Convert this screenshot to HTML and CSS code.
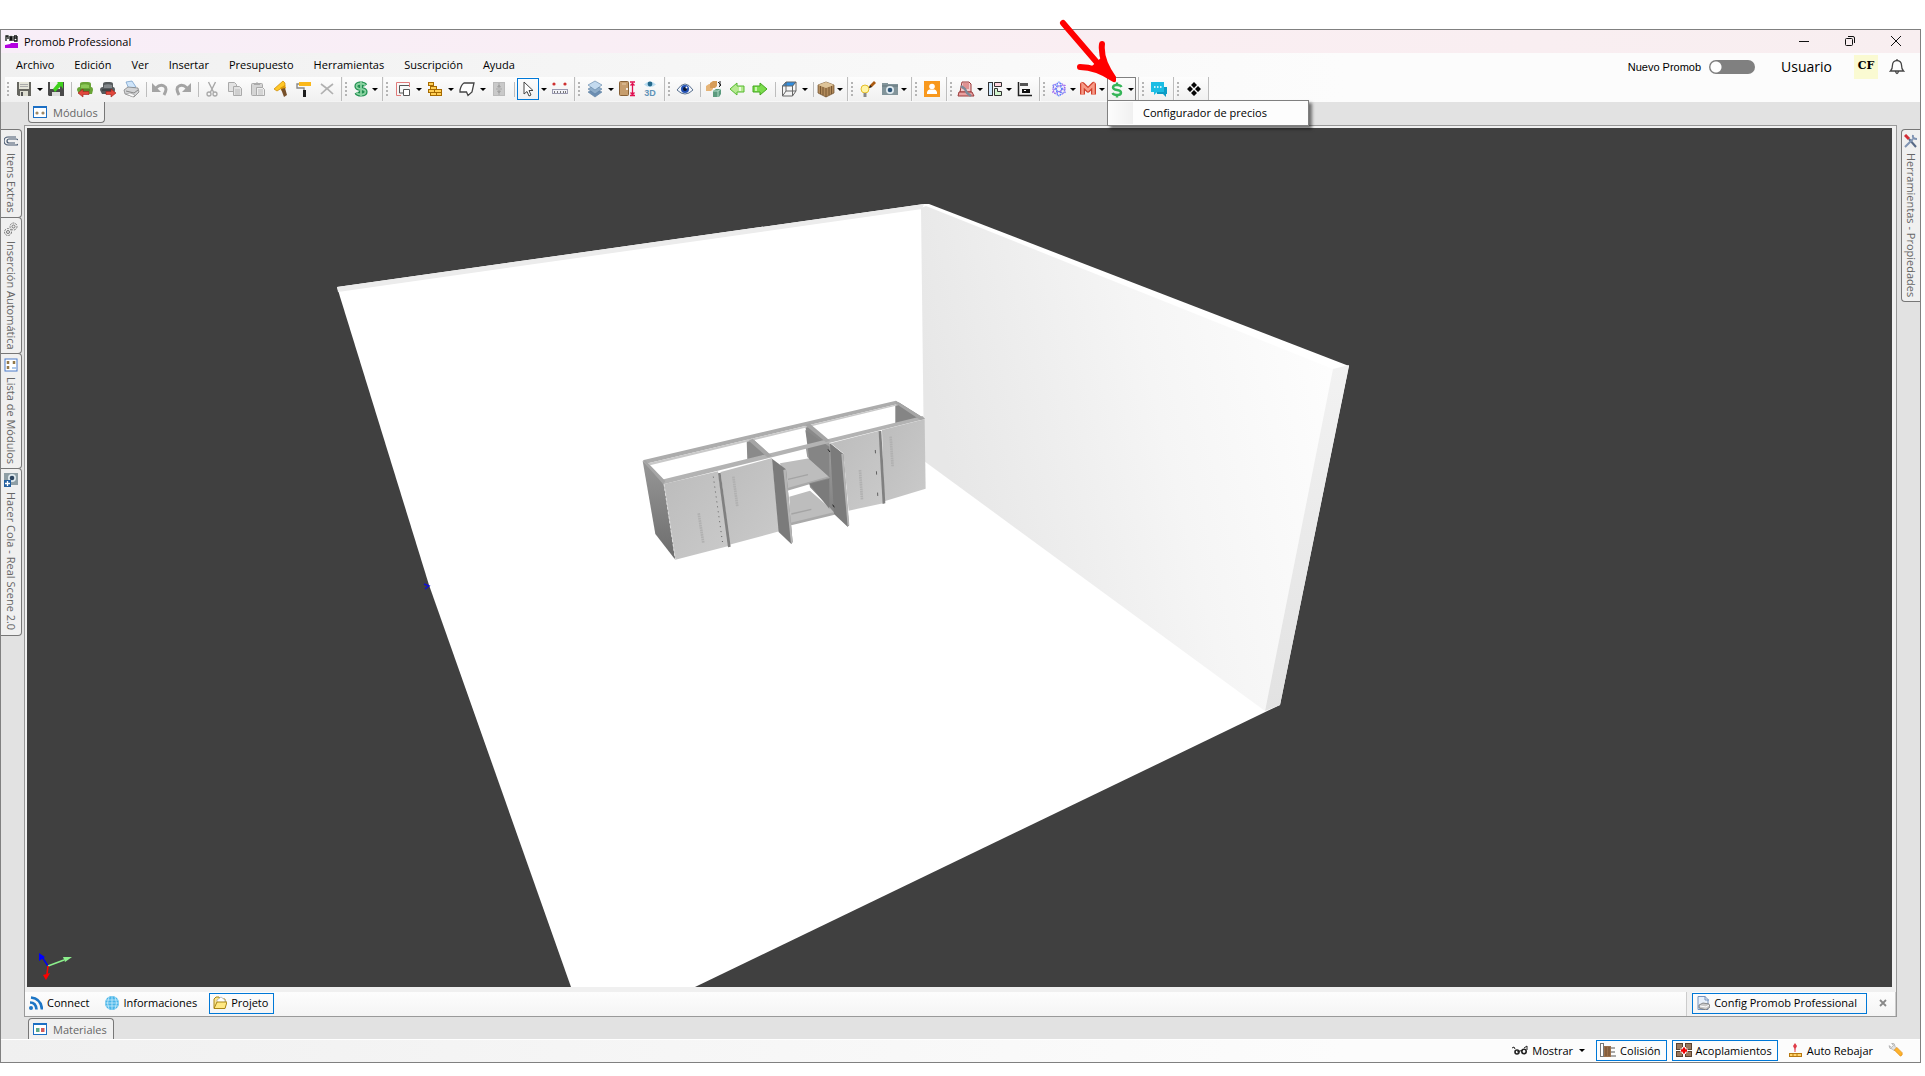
FILE: index.html
```html
<!DOCTYPE html>
<html lang="es">
<head>
  <meta charset="UTF-8" />
  <meta name="viewport" content="width=device-width, initial-scale=1.0" />
  <title>Promob Professional</title>
  <link rel="stylesheet" href="styles.css">
</head>
<body>
  <div class="window">
    <header class="titlebar">
      <svg class="app-logo" viewBox="0 0 13 13"><rect width="13" height="13" fill="#fff"/><path d="M1 6V1h2v3M5 6V1l1 3 1-3v5M9 1h3M9 3h3M9 6h3V1M9 1v5" stroke="#111" stroke-width="1.3" fill="none"/><path d="M0 10l5-1 1-1h7v5H0z" fill="#b400e0"/></svg>
      <span class="app-title">Promob Professional</span>
      <div class="window-buttons">
        <button aria-label="Minimizar"><svg viewBox="0 0 12 12"><path d="M1 6.500h10" stroke="#111" fill="none"/></svg></button>
        <button aria-label="Restaurar"><svg viewBox="0 0 12 12"><rect x="1.500" y="3.500" width="7" height="7" rx="1" stroke="#111" fill="none"/><path d="M4 1.500h5q1.500 0 1.500 1.500v5" stroke="#111" fill="none"/></svg></button>
        <button aria-label="Cerrar"><svg viewBox="0 0 12 12"><path d="M1 1l10 10M11 1L1 11" stroke="#111" fill="none"/></svg></button>
      </div>
    </header>

    <div class="top-area">
      <div class="menu-row">
        <nav class="menu">
          <button>Archivo</button>
          <button>Edición</button>
          <button>Ver</button>
          <button>Insertar</button>
          <button>Presupuesto</button>
          <button>Herramientas</button>
          <button>Suscripción</button>
          <button>Ayuda</button>
        </nav>
        <div class="account">
          <label class="switch-label" for="nuevo">Nuevo Promob</label>
          <input type="checkbox" id="nuevo" class="switch" />
          <span class="user">Usuario</span>
          <span class="avatar">CF</span>
          <button class="bell" aria-label="Notificaciones"><svg viewBox="0 0 16 17"><path d="M1.500 13h13c-2-2-2-3-2-6a4.500 4.500 0 0 0-9 0c0 3 0 4-2 6zM6.500 13.500q1.500 4 3 0M8 2.500V1" fill="none" stroke="#444" stroke-width="1.300"/></svg></button>
        </div>
      </div>

      <div class="toolbar">
        <div class="group">
          <i class="grip"></i>
          <button class="tool drop" aria-label="Guardar"><svg viewBox="0 0 16 16"><path d="M1 1h14v14H2.500L1 13.500z" fill="#666660"/><rect x="3" y="1" width="10" height="7" fill="#e4e4d8"/><path d="M4 3.500h8M4 5.500h8" stroke="#aaa"/><rect x="4" y="10" width="8" height="5" fill="#deded2"/><rect x="5" y="11" width="2" height="4" fill="#555"/></svg></button>
          <button class="tool" aria-label="Guardar como"><svg viewBox="0 0 16 16"><path d="M0 1h16v14H1L0 14z" fill="#4a4a4a"/><rect x="2" y="1" width="10" height="7" fill="#eee"/><rect x="4" y="11" width="8" height="4" fill="#ddd"/><path d="M15 1H9l1 1-5 6 2 3 6-6 2 3z" fill="#3fd11c"/></svg></button>
          <i class="sep"></i>
          <button class="tool" aria-label="Importar módulo"><svg viewBox="0 0 16 16"><path d="M3 6V3q0-2 3-2h5q3 0 3 2v3q2 0 2 3l-1 4H2L0 9q0-3 3-3z" fill="#69a437"/><path d="M4 7V4q4-1.500 8 0v3z" fill="#8cc957"/><path d="M3 9h10" stroke="#3e6a1e"/><path d="M1 12l5-4v2.500h6v3H6V16z" fill="#e2473c" stroke="#9b1f17" stroke-width=".6"/></svg></button>
          <button class="tool" aria-label="Exportar módulo"><svg viewBox="0 0 16 16"><path d="M3 6V3q0-2 3-2h4q3 0 3 2v3q2 0 2 3l-1 4H2L0 9q0-3 3-3z" fill="#555a5c"/><path d="M4 7V4q4-1.500 8 0v3z" fill="#83888b"/><path d="M2 9h10" stroke="#2c2f30"/><path d="M16 12l-5-4v2.500H6v3h5V16z" fill="#e2473c" stroke="#9b1f17" stroke-width=".6"/></svg></button>
          <button class="tool" aria-label="Imprimir"><svg viewBox="0 0 16 16"><path d="M3 1l6-1 4 6-7 2z" fill="#cfe5fa" stroke="#6b97c4" stroke-width=".7"/><path d="M1 9l4-3 10 1 1 4-5 5-9-3z" fill="#d2d3d5" stroke="#777" stroke-width=".7"/><path d="M3 10l8 2 4-3" fill="none" stroke="#888"/><path d="M3 13l4-1 5 2-2 2z" fill="#fafafa" stroke="#888" stroke-width=".5"/></svg></button>
          <i class="sep"></i>
          <button class="tool" aria-label="Deshacer"><svg viewBox="0 0 16 16"><path d="M4 7q4-4 8-2t0 9" fill="none" stroke="#a4a4a4" stroke-width="3"/><path d="M0 2v9h9z" fill="#a4a4a4"/></svg></button>
          <button class="tool" aria-label="Rehacer"><svg viewBox="0 0 16 16"><path d="M12 7q-4-4-8-2t0 9" fill="none" stroke="#a4a4a4" stroke-width="3"/><path d="M16 2v9H7z" fill="#a4a4a4"/></svg></button>
          <i class="sep"></i>
          <button class="tool" aria-label="Cortar"><svg viewBox="0 0 16 16"><path d="M4.500 1l5 10M11.500 1l-5 10" stroke="#a8a8a8" stroke-width="1.400" fill="none"/><circle cx="5" cy="13" r="2" fill="none" stroke="#a8a8a8" stroke-width="1.300"/><circle cx="11" cy="13" r="2" fill="none" stroke="#a8a8a8" stroke-width="1.300"/></svg></button>
          <button class="tool" aria-label="Copiar"><svg viewBox="0 0 16 16"><g fill="#e2e2e2" stroke="#aaa"><path d="M1.500 1.500h6l2 2v7h-8z"/><path d="M6.500 5.500h6l2 2v7h-8z"/></g><path d="M8 9h5M8 11h5M8 13h5" stroke="#bbb"/></svg></button>
          <button class="tool" aria-label="Pegar"><svg viewBox="0 0 16 16"><rect x="1.500" y="2.500" width="11" height="12" rx="1" fill="#d5d5d5" stroke="#aaa"/><path d="M4 4V2h2l1-1 1 1h2v2z" fill="#aaa"/><path d="M6.500 6.500h6l2 2v6h-8z" fill="#eee" stroke="#aaa"/><path d="M8 9h5M8 11h5M8 13h5" stroke="#bbb"/></svg></button>
          <button class="tool" aria-label="Martillo"><svg viewBox="0 0 16 16"><path d="M1 8L10 0l2 2v3L4 10z" fill="#ffc727" stroke="#c88700" stroke-width=".7"/><path d="M7 7l5-3 1 3-4 3z" fill="#dd9a08"/><path d="M8 8l4-1 2 7-3 2z" fill="#77502a"/></svg></button>
          <button class="tool" aria-label="Pintar"><svg viewBox="0 0 16 16"><rect x="3" y="1" width="12" height="4" fill="#fbb81a"/><path d="M3 3H1v4h7v3" fill="none" stroke="#888" stroke-width="1.400"/><rect x="7" y="9" width="3" height="7" fill="#1c1c1c"/></svg></button>
          <button class="tool" aria-label="Borrar"><svg viewBox="0 0 16 16"><path d="M2 3q7 5 12 10M14 3Q7 8 2 13" stroke="#b1b1b1" stroke-width="1.700" fill="none"/></svg></button>
        </div>
        <div class="group">
          <i class="grip"></i>
          <button class="tool drop narrow" aria-label="Presupuesto"><svg viewBox="0 0 16 16"><path d="M12.500 4.500Q11 2.500 8 2.500 3.500 2.500 3.500 5.200 3.500 7.500 8 8t4.500 2.800Q12.500 13.500 8 13.500q-3.500 0-4.500-2M8 .5v15" fill="none" stroke="#1f8f50" stroke-width="4.200"/><path d="M12.500 4.500Q11 2.500 8 2.500 3.500 2.500 3.500 5.200 3.500 7.500 8 8t4.500 2.800Q12.500 13.500 8 13.500q-3.500 0-4.500-2M8 1v14" fill="none" stroke="#8ad3a1" stroke-width="1.800"/></svg></button>
        </div>
        <div class="group">
          <i class="grip"></i>
          <button class="tool drop" aria-label="Paredes"><svg viewBox="0 0 16 16"><path d="M14.500 6V1.500h-13v13H6" fill="none" stroke="#e07a7a"/><path d="M14 4.500H4.500V12h4" fill="none" stroke="#555"/><path d="M8.500 14.500v-6h6v6z" fill="#fff" stroke="#555"/></svg></button>
          <button class="tool drop" aria-label="Ladrillos"><svg viewBox="0 0 16 16"><g fill="#ffcf55" stroke="#a66a00"><rect x="1.500" y="1.500" width="5" height="3"/><rect x="3.500" y="5.500" width="6" height="3"/><rect x="1.500" y="8.500" width="6" height="3"/><rect x="7.500" y="8.500" width="7" height="3"/><rect x="3.500" y="11.500" width="6" height="3"/><rect x="9.500" y="11.500" width="5" height="3"/></g></svg></button>
          <button class="tool drop" aria-label="Polígono"><svg viewBox="0 0 16 16"><path d="M1 9q1-5 4-7h10l-2 9-4 3.500-1.500-3.500H1z" fill="#fff" stroke="#444" stroke-width="1.300"/></svg></button>
          <button class="tool" aria-label="Puerta"><svg viewBox="0 0 16 16"><rect x="2.500" y="1.500" width="11" height="13" fill="#c9c9c9" stroke="#bbb"/><path d="M8 2v12M5 8h2M9 8h2M8 4l-1.500 2h3zM8 12l-1.500-2h3z" stroke="#a2a2a2" fill="#a2a2a2" stroke-width=".8"/></svg></button>
          <i class="sep"></i>
          <button class="tool drop cursor-on" aria-label="Seleccionar"><svg viewBox="0 0 16 16"><path d="M4 1v12l3-2.500L9 15l2-1-2-4.500h4z" fill="#fff" stroke="#444"/></svg></button>
          <button class="tool" aria-label="Medir"><svg viewBox="0 0 16 16"><circle cx="2" cy="3" r="1.600" fill="#cf3030"/><circle cx="13" cy="3" r="1.600" fill="#cf3030"/><rect x=".5" y="8.500" width="15" height="4" fill="#f2f2f8" stroke="#9a9ab0"/><path d="M2.500 10v2M5.500 10v2M8.500 10v2M11.500 10v2M13.500 10v2" stroke="#777"/></svg></button>
        </div>
        <div class="group">
          <i class="grip"></i>
          <button class="tool drop" aria-label="Capas"><svg viewBox="0 0 16 16"><g stroke="#5b7fa3" stroke-width=".6"><path d="M1 11l7-3 7 3-7 5z" fill="#6d8eb2"/><path d="M1 8l7-4 7 4-7 5z" fill="#8eacc9"/><path d="M1 4l7-4 7 4-7 5z" fill="#c3daef"/></g></svg></button>
          <button class="tool" aria-label="Altura"><svg viewBox="0 0 16 16"><rect x=".5" y=".5" width="9" height="14" rx="1" fill="#c69d6d" stroke="#886136"/><path d="M3 3h4" stroke="#e6cca8"/><circle cx="8" cy="8" r="1" fill="#fff"/><path d="M11 1h5M11 14.500h5M13.500 2v12M11.500 4.500l2-2 2 2M11.500 11.500l2 2 2-2" fill="none" stroke="#e01050" stroke-width="1.300"/></svg></button>
          <button class="tool" aria-label="Vista 3D"><svg viewBox="0 0 16 16"><path d="M2 3.500q6-6 12 0-6 5-12 0z" fill="#b9dcf0"/><circle cx="8" cy="3" r="2.400" fill="#23698c"/><text x="8" y="15" text-anchor="middle" font-family="Liberation Sans" font-size="9" font-weight="bold" fill="#5f93b8">3D</text></svg></button>
        </div>
        <div class="group">
          <i class="grip"></i>
          <button class="tool" aria-label="Ver"><svg viewBox="0 0 16 16"><path d="M0 9q8-12 16 0-8 8-16 0z" fill="#f1f5fb" stroke="#59708e"/><circle cx="8" cy="8" r="4" fill="#2150b4"/><circle cx="8" cy="8" r="2" fill="#0b1630"/><circle cx="9.500" cy="6.500" r="1" fill="#fff"/></svg></button>
          <i class="sep"></i>
          <button class="tool" aria-label="Reemplazar"><svg viewBox="0 0 16 16"><path d="M0 5l3-2h4v5L5 10H0z" fill="#e6b476"/><path d="M4 2l3-2h4v5L9 7H4z" fill="#d69d59"/><path d="M7 10l3-2h5v5l-2 3H7z" fill="#5c9b7e"/><path d="M7 10h5v6M12 10l3-2" fill="none" stroke="#b1dbc6"/><path d="M12 1l3 3-2 2M14 0v5" stroke="#222" fill="none"/></svg></button>
          <button class="tool" aria-label="Anterior"><svg viewBox="0 0 16 16"><path d="M1 8l7-6v3h7v6H8v3z" fill="#b5ea90" stroke="#57b931"/><path d="M11 6v4" stroke="#e8fadd" stroke-width="2"/></svg></button>
          <button class="tool" aria-label="Siguiente"><svg viewBox="0 0 16 16"><path d="M15 8L8 2v3H1v6h7v3z" fill="#7bdc4d" stroke="#43a51e"/><path d="M4 6v4" stroke="#c8f5ae" stroke-width="2"/></svg></button>
          <i class="sep"></i>
          <button class="tool drop" aria-label="Perspectiva"><svg viewBox="0 0 16 16"><path d="M5 1h10l-3 4H1z" fill="#2f8de0"/><path d="M1.500 5h10v10h-10zM1.500 5L5 1h10l-3.500 4M15 1v9l-3.500 5M5 1v9h10M5 10l-3.500 5" fill="none" stroke="#666"/></svg></button>
          <i class="sep"></i>
          <button class="tool drop narrow" aria-label="Materiales"><svg viewBox="0 0 16 16"><path d="M0 4l8-3 8 3v8l-8 4-8-4z" fill="#b28b5c" stroke="#6b4c2a" stroke-width=".7"/><path d="M0 4l8 3 8-3-8-3z" fill="#dec499"/><path d="M8 7v9M2.500 5v8M5 6v8M11 6v8M13.500 5v8" stroke="#6b4c2a" stroke-width=".8"/></svg></button>
        </div>
        <div class="group">
          <i class="grip"></i>
          <button class="tool" aria-label="Iluminación"><svg viewBox="0 0 16 16"><circle cx="5" cy="8" r="4" fill="#fff5a6" stroke="#e4bd2a"/><path d="M3.500 12h3v4h-3z" fill="#888"/><path d="M9 7l1-3 4-4 2 2-4 4z" fill="#aa5a10"/><path d="M9 7l1-3 2 2z" fill="#222"/></svg></button>
          <button class="tool drop narrow" aria-label="Cámara"><svg viewBox="0 0 16 16"><path d="M0 2h6v1h10v11H0z" fill="#82949a"/><path d="M0 5h16" stroke="#64767c"/><circle cx="8" cy="9" r="4" fill="#dfeaf0"/><circle cx="8" cy="9" r="2.300" fill="#31587a"/></svg></button>
        </div>
        <div class="group">
          <i class="grip"></i>
          <button class="tool" aria-label="Usuario"><svg viewBox="0 0 16 16"><rect width="16" height="16" fill="#f8981d"/><circle cx="8" cy="5.500" r="2.800" fill="#fff"/><path d="M3 13V11q1-3 3-2.500h4q2-.5 3 2.500v2z" fill="#fff"/></svg></button>
        </div>
        <div class="group">
          <i class="grip"></i>
          <button class="tool drop narrow" aria-label="Calcular"><svg viewBox="0 0 16 16"><path d="M4 1h7l2 2v8H2z" fill="#f3caca" stroke="#9a3939"/><path d="M5 3h6M5 5h6M4 7h7" stroke="#cc5b5b"/><path d="M1 11h13l2 4H0z" fill="#e9a0a0" stroke="#9a3939"/><path d="M3 5l4 3 2 4 4 3" stroke="#7c8a98" stroke-width="2.400" fill="none"/></svg></button>
          <button class="tool drop narrow" aria-label="Distribución"><svg viewBox="0 0 16 16"><g stroke="#333"><rect x="1.500" y="1.500" width="4" height="13" fill="#cde8ff"/><path d="M7.500 1.500h7v4h-7z" fill="#ffd6e0"/><path d="M7.500 7.500h3v3h4v4h-7z" fill="#d3f5d0"/></g></svg></button>
          <button class="tool" aria-label="Informe"><svg viewBox="0 0 16 16"><path d="M1.500 1v13.500H15" fill="none" stroke="#222" stroke-width="1.500"/><rect x="3" y="2" width="8" height="3" fill="#555"/><rect x="5" y="8" width="8" height="4" fill="#111"/><rect x="7" y="9" width="2" height="1" fill="#fff"/></svg></button>
        </div>
        <div class="group">
          <i class="grip"></i>
          <button class="tool drop narrow" aria-label="Red"><svg viewBox="0 0 16 16"><g fill="none" stroke-width="1.200" stroke-dasharray="1.500 1"><circle cx="8" cy="8" r="6" stroke="#a271f3"/><ellipse cx="8" cy="8" rx="2.500" ry="7" stroke="#4c8bff"/><ellipse cx="8" cy="8" rx="2.500" ry="7" transform="rotate(60 8 8)" stroke="#9a63ee"/><ellipse cx="8" cy="8" rx="2.500" ry="7" transform="rotate(120 8 8)" stroke="#6f7cf7"/></g></svg></button>
          <button class="tool drop narrow" aria-label="Maker"><svg viewBox="0 0 16 16"><path d="M2.500 13.500V3.500L8 9l5.500-5.500v10" fill="none" stroke="#cf3f2c" stroke-width="5" stroke-linejoin="round"/><path d="M2.500 13.500V3.500L8 9l5.500-5.500v10" fill="none" stroke="#f79a86" stroke-width="2.500"/></svg></button>
          <div class="drop-host">
            <button class="tool drop narrow open" aria-label="Precios" aria-expanded="true"><svg viewBox="0 0 16 16"><path d="M12.500 5Q11.500 3 8 3 4 3 4 5.300 4 7.500 8 8t4 2.700Q12 13 8 13q-3.500 0-4.500-2M8 .5V3M8 13v2.500" fill="none" stroke="#35b558" stroke-width="2.400"/></svg></button>
            <div class="popup"><button>Configurador de precios</button></div>
          </div>
        </div>
        <div class="group">
          <i class="grip"></i>
          <button class="tool" aria-label="Chat"><svg viewBox="0 0 16 16"><path d="M5 6h11v7h-1v3l-3-3H6z" fill="#0c9cc5"/><path d="M0 1h13v10H6l-3 3v-3H0z" fill="#1bbde4"/><path d="M3 6h1.500M6 6h1.500M9 6h1.500" stroke="#fff" stroke-width="1.500"/></svg></button>
        </div>
        <div class="group">
          <i class="grip"></i>
          <button class="tool" aria-label="Módulos"><svg viewBox="0 0 16 16"><path d="M8 1l3 3-3 3-3-3zM4 5l3 3-3 3-3-3zM12 5l3 3-3 3-3-3zM8 9l3 3-3 3-3-3z" fill="#050505"/></svg></button>
        </div>
      </div>
    </div>

    <main class="workspace">
      <aside class="rail rail-left">
        <button class="side-tab"><svg viewBox="0 0 14 14"><path d="M12 3H4a3.500 3.500 0 0 0 0 8h8a2.500 2.500 0 0 0 0-6H5a1.500 1.500 0 0 0 0 4h6" fill="none" stroke="#44566e" stroke-width="1.200"/></svg>Itens Extras</button>
        <button class="side-tab"><svg viewBox="0 0 14 14"><g fill="#eee" stroke="#777"><circle cx="9.500" cy="4.500" r="3.500" stroke-dasharray="2 1"/><circle cx="9.500" cy="4.500" r="1.500"/><circle cx="4" cy="10" r="3.500" stroke-dasharray="2 1"/><circle cx="4" cy="10" r="1.500"/></g></svg>Inserción Automática</button>
        <button class="side-tab"><svg viewBox="0 0 14 14"><rect x="1" y="1" width="12" height="12" fill="#fff" stroke="#4a7ac9"/><path d="M4 3v3M4 8v3M10 3v3" stroke="#937948" stroke-width="2.500"/><path d="M8 10h4" stroke="#5f93d6"/></svg>Lista de Módulos</button>
        <button class="side-tab"><svg viewBox="0 0 14 14"><rect x="0" y="0" width="14" height="12" fill="#8e9ea5"/><circle cx="8" cy="5" r="4" fill="#dfe9ee"/><circle cx="8" cy="5" r="2.300" fill="#2c4560"/><rect x="0" y="7" width="7" height="7" fill="#245f9f"/><path d="M3.500 8v5M1 10.500h5" stroke="#fff" stroke-width="1.300"/></svg>Hacer Cola - Real Scene 2.0</button>
      </aside>

      <section class="center">
        <div class="tab-row">
          <button class="dock-tab tab-top"><svg viewBox="0 0 14 14"><rect x=".5" y="1.500" width="13" height="11" fill="#fff" stroke="#1c6fc4"/><path d="M0 2h14" stroke="#1c6fc4" stroke-width="2"/><circle cx="4" cy="8" r="1.600" fill="#9f8966"/><circle cx="10" cy="8" r="1.600" fill="#9f8966"/></svg>Módulos</button>
        </div>

        <div class="frame">
          <div class="viewport">
            <svg class="scene" viewBox="27 128 1865 859" preserveAspectRatio="xMidYMid slice">
              <defs>
                <linearGradient id="wall" x1="0" y1="0.300" x2="1" y2="0">
                  <stop offset="0" stop-color="#e7e7e7"/><stop offset=".5" stop-color="#f5f5f5"/><stop offset="1" stop-color="#fff"/>
                </linearGradient>
                <linearGradient id="door" x1="0" y1="0" x2="1" y2="1">
                  <stop offset="0" stop-color="#bcbcbc"/><stop offset="1" stop-color="#cacaca"/>
                </linearGradient>
                <linearGradient id="side" x1="0" y1="0" x2="0" y2="1">
                  <stop offset="0" stop-color="#979797"/><stop offset="1" stop-color="#6c6c6c"/>
                </linearGradient>
                <linearGradient id="edge" x1="0" y1="0" x2="0" y2="1">
                  <stop offset="0" stop-color="#f2f2f2"/><stop offset="1" stop-color="#e2e2e2"/>
                </linearGradient>
              </defs>
              <!-- room -->
              <path d="M337 287L924 204h5l420 162-69 339-585 282H571L429 585z" fill="#fff"/>
              <path d="M337 287L924 204l-2 5-584 83z" fill="#ececec"/>
              <path d="M921 208l5-2 407 163-68 342-341-250z" fill="url(#wall)"/>
              <path d="M1333 369l16-4-69 340-15 6z" fill="url(#edge)"/>
              <path d="M424 584l5 2-4 3" fill="none" stroke="#1010d0" stroke-width="1.500"/>
              <!-- base cabinets, drawn three times larger -->
              <g transform="translate(620 380) scale(.3333)">
                <path d="M380 180l18-4 48 46-18 5-46 12z" fill="#8a8a8a"/>
                <path d="M826 75l10-8 76 48-86 15z" fill="#858585"/>
                <path d="M556 138l12-6 54 50-58 6z" fill="#8a8a8a"/>
                <path d="M68 243l58 56 6 13 34 227-60-77z" fill="url(#side)"/>
                <path d="M68 241L828 62l6 10L84 250z" fill="#acacac"/>
                <path d="M84 250L834 72v4L90 256z" fill="#c9c9c9"/>
                <path d="M480 250l88-15 62 56-126 38zM508 350l62-18 76 66-134 36z" fill="#bdbdbd"/>
                <path d="M500 325l130-37v7l-128 37zM512 428l132-32v8l-130 32z" fill="#a9a9a9"/>
                <path d="M556 196l70-8 44 34 14 218-114-118-2-12 62-17-68-62z" fill="url(#side)" opacity=".9"/>
                <path d="M556 150l72 50v90l-60-52z" fill="#858585"/>
                <path d="M568 312l60-16v90z" fill="#7b7b7b"/>
                <path d="M132 312l162-38 32 224-160 41z" fill="url(#door)"/>
                <path d="M302 276l154-42 22 220-150 40z" fill="url(#door)"/>
                <path d="M632 190l146-38 12 218-104 22-16-172z" fill="url(#door)"/>
                <path d="M786 150l128-32 3 208-124 38z" fill="url(#door)"/>
                <path d="M294 280l8-2 30 222-8 2z" fill="#808080"/>
                <path d="M776 154l8-2 12 218-8 2z" fill="#808080"/>
                <path d="M456 236l42 32 20 218-4 6-38-36z" fill="#7b7b7b"/>
                <path d="M490 270l8-2 20 218-5 4z" fill="#b5b5b5"/>
                <path d="M630 190l40 32 17 214-4 4-41-38z" fill="#7b7b7b"/>
                <path d="M664 222l6-1 18 214-5 4z" fill="#b5b5b5"/>
                <path d="M122 300L908 108l7 9-785 196z" fill="#b3b3b3"/>
                <path d="M386 182l12-6 58 52-14 4zM556 136l12-6 62 52-12 5zM828 62l87 54-14 4-75-50zM68 243l8-2 60 62-6 10z" fill="#a5a5a5"/>
                <path d="M280 290l28 200" stroke="#606060" stroke-width="3" stroke-dasharray="3 12"/>
                <path d="M766 210l8 150" stroke="#606060" stroke-width="3" stroke-dasharray="10 54"/>
                <path d="M132 312l34 226" stroke="#dedede" stroke-width="3" stroke-dasharray="8 6"/>
                <path d="M236 400l14 90M340 290l12 90M720 270l6 88M812 170l6 90" stroke="#b1b1b1" stroke-width="8" stroke-dasharray="5 2"/>
                <path d="M504 298l60-14M514 402l60-14" stroke="#a4a4a4" stroke-width="4"/>
                <path d="M624 208l6 8M638 374l5 8" stroke="#222" stroke-width="3"/>
              </g>
              <!-- axes -->
              <g transform="translate(1 -1)">
                <path d="M47 967l-6-9" stroke="#0000f0" stroke-width="1.500"/><path d="M38 954l6 4-6 4z" fill="#00f"/>
                <path d="M47 967l16-6" stroke="#8cf08c" stroke-width="1.500"/><path d="M71 958l-9 0 2 5z" fill="#8cf08c"/>
                <path d="M47 967l-1 8" stroke="#f00" stroke-width="1.500"/><path d="M42 976l7-2-4 7z" fill="#f00"/>
              </g>
            </svg>
          </div>
          <div class="panel-row">
            <div class="panel-strip">
              <button class="panel-btn"><svg viewBox="0 0 14 14"><circle cx="2" cy="12" r="2" fill="#1d76c6"/><path d="M1 6.500q6 0 6.500 7M2 1.500q10 1 11 12" fill="none" stroke="#1d76c6" stroke-width="2.700"/></svg>Connect</button>
              <button class="panel-btn"><svg viewBox="0 0 14 14"><circle cx="7" cy="7" r="7" fill="#49b5e8"/><path d="M1 4h12M0 7h14M1 10h12M7 0v14M4 1q-3 6 0 12M10 1q3 6 0 12" fill="none" stroke="#c9ecfb" stroke-width=".8"/></svg>Informaciones</button>
              <button class="panel-btn on"><svg viewBox="0 0 14 14"><path d="M1 12V3l2-2h3l1 2h5v9z" fill="#f9e48f" stroke="#a98516"/><path d="M4 4l4-3 4 3v4H4z" fill="#fff" stroke="#999" stroke-width=".6"/><path d="M1 12.500L4 6h10l-2 6.500z" fill="#ffe884" stroke="#a98516"/></svg>Projeto</button>
            </div>
            <div class="panel-strip config">
              <button class="panel-btn on"><svg viewBox="0 0 14 14"><path d="M2 .5h7l3 3v10H2z" fill="#e8f0fa" stroke="#7793bd"/><path d="M9 0v4h4" fill="none" stroke="#7793bd"/><path d="M3 9l4-2 6 1 1 3-4 3-7-2z" fill="#c8c8c8" stroke="#666" stroke-width=".7"/><path d="M4 10l6 1 3-2" stroke="#fff" fill="none"/></svg>Config Promob Professional</button>
              <button class="close" aria-label="Cerrar panel"><svg viewBox="0 0 8 8"><path d="M1 1l6 6M7 1L1 7" stroke="#888" stroke-width="1.800"/></svg></button>
            </div>
          </div>
        </div>

        <div class="tab-row bottom">
          <button class="dock-tab tab-bottom"><svg viewBox="0 0 14 14"><rect x=".5" y="1.500" width="13" height="11" fill="#fff" stroke="#1c6fc4"/><path d="M0 2h14" stroke="#1c6fc4" stroke-width="2"/><rect x="3" y="6" width="3.500" height="4" fill="#5fa98a"/><rect x="8" y="6" width="3.500" height="4" fill="#d15a5a"/></svg>Materiales</button>
        </div>
      </section>

      <aside class="rail rail-right">
        <button class="side-tab"><svg viewBox="0 0 14 14"><path d="M1 1l4 4" stroke="#d22c35" stroke-width="3"/><path d="M5 5l7 8" stroke="#586a86" stroke-width="2"/><path d="M1 13l8-8M9 1q-1 4 4 4" fill="none" stroke="#8094b3" stroke-width="2"/></svg>Herramientas - Propiedades</button>
      </aside>
    </main>

    <footer class="statusbar">
      <button class="panel-btn status-drop"><svg viewBox="0 0 16 14"><path d="M0 5l2-1 1 2M5 9l6-2M12 5l3-2v4" fill="none" stroke="#222"/><circle cx="5" cy="9" r="2" fill="none" stroke="#222" stroke-width="1.600"/><circle cx="12" cy="8.500" r="2.200" fill="none" stroke="#222" stroke-width="1.600"/></svg>Mostrar</button>
      <button class="panel-btn on"><svg viewBox="0 0 16 14"><rect x=".5" y=".5" width="3" height="13" fill="#fff" stroke="#777"/><path d="M4 3h7v11H4z" fill="#9b704b"/><path d="M6 4v9M9 4v9" stroke="#6e4a2c"/><path d="M11 5h4M11 9h4M11 13h5" stroke="#555"/></svg>Colisión</button>
      <button class="panel-btn on"><svg viewBox="0 0 16 14"><g fill="#98775c" stroke="#5a4230"><rect x=".5" y=".5" width="6" height="6"/><rect x="9.500" y=".5" width="6" height="6"/><rect x=".5" y="8.500" width="6" height="5"/><rect x="9.500" y="8.500" width="6" height="5"/></g><path d="M8 4v7M4.500 7.500h7" stroke="#fff" stroke-width="4"/><path d="M8 4.500v6M5 7.500h6" stroke="#f00000" stroke-width="2.400"/></svg>Acoplamientos</button>
      <button class="panel-btn"><svg viewBox="0 0 14 14"><path d="M7 0l2 3-2 4-2-4z" fill="#df3d49"/><path d="M7 6v3" stroke="#df3d49"/><rect x="1.500" y="10.500" width="12" height="3" fill="#ffd36b" stroke="#b77812"/><path d="M5 10v3M9 10v3" stroke="#b77812"/></svg>Auto Rebajar</button>
      <button class="panel-btn" aria-label="Ajustes"><svg viewBox="0 0 16 16"><path d="M3 0q4 0 4 4l2 2-3 3-2-2Q0 7 0 3l3 2 2-2z" fill="#e3e3e3" stroke="#999" stroke-width=".7"/><path d="M6 8l3-3 6 6q1 3-2 4z" fill="#fdb32c" stroke="#dc8610" stroke-width=".7"/></svg></button>
    </footer>
  </div>

  <svg class="pointer" viewBox="0 0 60 70"><path d="M7 7L50 57" stroke="#f00" stroke-width="6" stroke-linecap="round"/><path d="M24 51q16 0 34 12Q44 44 46 28" fill="none" stroke="#f00" stroke-width="6" stroke-linecap="round" stroke-linejoin="round"/><path d="M36 50l22 14-11-24z" fill="#f00"/></svg>
</body>
</html>
```
FILE: styles.css
```css
* {
  box-sizing: border-box;
}

body {
  margin: 0;
  padding: 29px 4px 13px 0;
  height: 100vh;
  background: #fff;
  color: #000;
  font-family: "Open Sans", "Noto Sans", sans-serif;
  font-size: 11px;
  overflow: hidden;
}

button {
  font: inherit;
  color: inherit;
  background: none;
  border: none;
  padding: 0;
  margin: 0;
  white-space: nowrap;
}

svg {
  display: block;
  flex: none;
}

.window {
  display: flex;
  flex-direction: column;
  height: 100%;
  border: 1px solid #808080;
  background: #e2e2e2;
}

/* title bar */
.titlebar {
  display: flex;
  align-items: center;
  height: 23px;
  padding: 0 1px 1px 4px;
  background: linear-gradient(90deg, #f8eef8, #faeef2 60%, #f8eef0);
}

.app-logo {
  width: 13px;
  height: 13px;
}

.app-title {
  margin-left: 6px;
}

.window-buttons {
  display: flex;
  margin-left: auto;
}

.window-buttons button {
  display: flex;
  justify-content: center;
  width: 46px;
}

.window-buttons svg {
  width: 12px;
  height: 12px;
}

/* menu and toolbars */
.top-area {
  background: linear-gradient(90deg, #f0f0f0, #fcfcfc 70%);
}

.menu-row {
  display: flex;
  justify-content: space-between;
  height: 24px;
}

.menu {
  display: flex;
  padding-left: 5px;
}

.menu button {
  padding: 0 10px 2px;
}

.account {
  display: flex;
  align-items: center;
  padding: 3px 15px 0 0;
}

.switch-label {
  font-family: "Liberation Sans", Arial, sans-serif;
}

.switch {
  appearance: none;
  width: 46px;
  height: 14px;
  margin: 0 0 0 8px;
  border-radius: 7px;
  background: radial-gradient(circle at 7px 7px, #fff 5px, transparent 6px) #808080;
}

.user {
  margin-left: 26px;
  font-size: 14px;
}

.avatar {
  width: 24px;
  height: 24px;
  margin-left: 22px;
  background: #fafad2;
  font-family: "DejaVu Serif", serif;
  font-size: 11px;
  font-weight: bold;
  line-height: 22px;
  text-align: center;
}

.bell {
  margin-left: 11px;
}

.bell svg {
  width: 16px;
  height: 17px;
}

.toolbar {
  display: flex;
  height: 25px;
  padding: 0 0 1px 4px;
}

.group {
  display: flex;
  align-items: center;
  margin-right: 1px;
  padding-right: 2px;
  border-right: 1px solid #bdbdbd;
  background: linear-gradient(#fdfdfd, #f0f0f0);
}

.grip {
  width: 8px;
  height: 15px;
  background: repeating-linear-gradient(#b4b4b4 0 2px, transparent 2px 4px) 2px 0 / 2px 100% no-repeat;
}

.sep {
  width: 6px;
  height: 15px;
  background: linear-gradient(#bdbdbd, #bdbdbd) center / 1px 100% no-repeat;
}

.tool {
  display: flex;
  align-items: center;
  width: 23px;
  height: 22px;
  padding: 0 3px;
}

.tool svg {
  width: 16px;
  height: 16px;
  overflow: visible;
}

.drop {
  width: 32px;
}

.drop::after,
.status-drop::after {
  content: "";
  border: 3px solid transparent;
  border-top-color: #000;
  border-bottom: none;
}

.drop::after {
  margin-left: 5px;
}

.narrow {
  width: 29px;
  padding-left: 2px;
}

.narrow::after {
  margin-left: 3px;
}

.cursor-on {
  background: linear-gradient(#0078d7, #0078d7) 0 0 / 22px 1px no-repeat,
    linear-gradient(#0078d7, #0078d7) 0 100% / 22px 1px no-repeat,
    linear-gradient(#0078d7, #0078d7) 0 0 / 1px 100% no-repeat,
    linear-gradient(#0078d7, #0078d7) 21px 0 / 1px 100% no-repeat;
}

.drop-host {
  position: relative;
  align-self: stretch;
}

.open {
  height: 24px;
  border: 1px solid #808080;
  border-bottom: none;
  padding-left: 1px;
}

.popup {
  position: absolute;
  z-index: 2;
  top: 23px;
  left: 0;
  padding: 1px;
  border: 1px solid #808080;
  background: #fdfdfd;
  box-shadow: 3px 3px 3px rgba(0, 0, 0, 0.5);
}

.popup button {
  display: block;
  height: 22px;
  padding: 0 40px 2px 34px;
  background: linear-gradient(90deg, #fcfcfc, #f0f0f0) 0 0 / 24px 100% no-repeat;
}

/* docks */
.workspace {
  display: flex;
  flex: 1;
  min-height: 0;
}

.rail {
  display: flex;
  flex-direction: column;
  flex: none;
  width: 23px;
  padding-top: 27px;
}

.side-tab {
  display: flex;
  align-items: center;
  gap: 5px;
  width: 21px;
  padding: 4px 0;
  border: 1px solid #777;
  border-left: none;
  border-radius: 0 4px 4px 0;
  background: #f0f0f0;
  color: #666;
  writing-mode: vertical-rl;
}

.side-tab + .side-tab {
  margin-top: -1px;
}

.side-tab svg,
.dock-tab svg {
  width: 14px;
  height: 14px;
}

.rail-right {
  align-items: flex-end;
}

.rail-right .side-tab {
  width: 19px;
  border: 1px solid #777;
  border-right: none;
  border-radius: 4px 0 0 4px;
}

.center {
  display: flex;
  flex-direction: column;
  flex: 1;
  min-width: 0;
}

.tab-row {
  display: flex;
  align-items: flex-start;
  height: 23px;
  padding-left: 4px;
}

.tab-row.bottom {
  align-items: flex-end;
  height: 22px;
}

.dock-tab {
  display: flex;
  align-items: center;
  gap: 6px;
  height: 21px;
  padding: 0 6px 0 4px;
  border: 1px solid #777;
  background: #f0f0f0;
  color: #666;
}

.tab-top {
  border-top: none;
  border-radius: 0 0 4px 4px;
}

.tab-bottom {
  border-bottom: none;
  border-radius: 4px 4px 0 0;
}

.frame {
  display: flex;
  flex-direction: column;
  flex: 1;
  min-height: 0;
  border: 1px solid #999;
  background: #f0f0f0;
}

.viewport {
  flex: 1;
  min-height: 0;
  margin: 2px 4px 5px 2px;
  background: #404040;
}

.scene {
  width: 100%;
  height: 100%;
}

.panel-row {
  display: flex;
  gap: 5px;
  height: 24px;
}

.panel-strip {
  display: flex;
  align-items: center;
  flex: 1;
  gap: 6px;
  padding-bottom: 2px;
  background: linear-gradient(#fdfdfd, #f4f4f4);
  border-right: 1px solid #ccc;
}

.config {
  flex: none;
  gap: 8px;
  padding-right: 4px;
}

.panel-btn {
  display: flex;
  align-items: center;
  gap: 4px;
  height: 21px;
  padding: 0 5px 1px 3px;
  border: 1px solid transparent;
}

.config .panel-btn {
  padding-right: 9px;
}

.panel-btn svg {
  width: 14px;
  height: 14px;
}

.panel-btn.on {
  border-color: #0078d7;
}

.close {
  padding: 4px;
}

.close svg {
  width: 8px;
  height: 8px;
}

/* status bar */
.statusbar {
  display: flex;
  align-items: flex-start;
  justify-content: flex-end;
  gap: 5px;
  height: 23px;
  padding-right: 10px;
  border-top: 1px solid #fff;
  background: linear-gradient(90deg, #f0f0f0, #fcfcfc 70%);
}

.statusbar svg {
  width: 16px;
}

.status-drop::after {
  margin-left: 2px;
}

/* red arrow over the toolbar */
.pointer {
  position: absolute;
  z-index: 3;
  top: 16px;
  left: 1056px;
  width: 60px;
  height: 70px;
}
```
